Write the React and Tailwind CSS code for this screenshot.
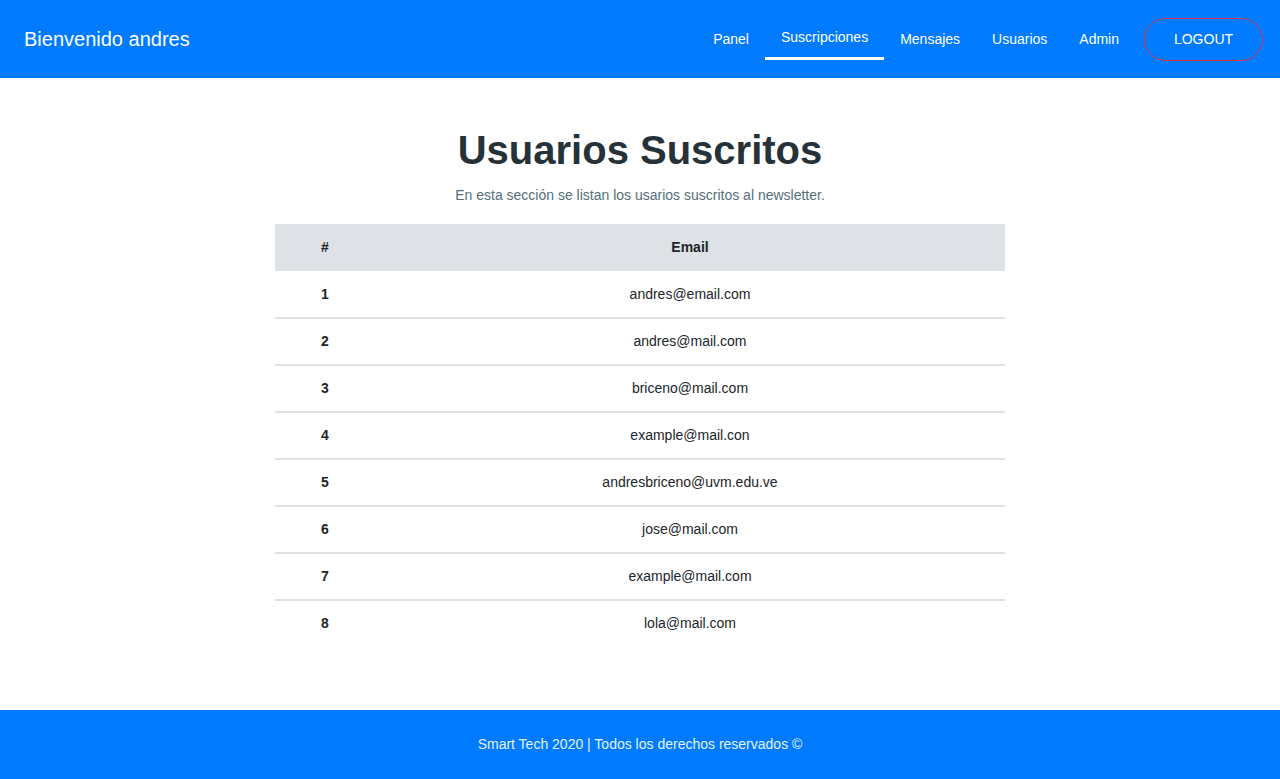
const users = [
  { id: 1, email: 'andres@email.com' },
  { id: 2, email: 'andres@mail.com' },
  { id: 3, email: 'briceno@mail.com' },
  { id: 4, email: 'example@mail.con' },
  { id: 5, email: 'andresbriceno@uvm.edu.ve' },
  { id: 6, email: 'jose@mail.com' },
  { id: 7, email: 'example@mail.com' },
  { id: 8, email: 'lola@mail.com' },
];

const links = ['Panel', 'Suscripciones', 'Mensajes', 'Usuarios', 'Admin'];

export default function App() {
  return (
    <div className="min-h-[779px] flex flex-col bg-white font-['Liberation_Sans',Arial,sans-serif]">
      {/* Navbar */}
      <nav className="h-[78px] bg-[#007bff] flex items-center justify-between pl-6 pr-[17px]">
        <span className="text-[20px] text-white">Bienvenido andres</span>
        <div className="flex items-center h-full">
          {links.map((l) =>
            l === 'Suscripciones' ? (
              <a key={l} className="px-4 h-[41px] flex items-center text-[14px] text-white border-b-[3px] border-white">
                {l}
              </a>
            ) : (
              <a key={l} className="px-4 text-[14px] text-white">
                {l}
              </a>
            )
          )}
          <button className="ml-[9px] w-[119px] h-[43px] rounded-full border border-[#dc3545] text-[14px] text-white">
            LOGOUT
          </button>
        </div>
      </nav>

      {/* Content */}
      <main className="flex-1 pt-[48px] pb-[64px]">
        <h1 className="text-center text-[40px] leading-[48px] font-bold text-[#263238]">Usuarios Suscritos</h1>
        <p className="mt-[11px] mb-[18px] text-center text-[14px] leading-[21px] text-[#546e7a]">
          En esta sección se listan los usarios suscritos al newsletter.
        </p>
        <table className="w-[730px] mx-auto text-[14px] text-[#212529]">
          <thead>
            <tr className="bg-[#dee2e6] h-[47px]">
              <th className="w-[100px] font-bold">#</th>
              <th className="font-bold">Email</th>
            </tr>
          </thead>
          <tbody>
            {users.map((u, i) => (
              <tr key={u.id} className={i < users.length - 1 ? 'h-[47px] border-b-2 border-[#dee2e6]' : 'h-[46px]'}>
                <td className="text-center font-bold">{u.id}</td>
                <td className="text-center">{u.email}</td>
              </tr>
            ))}
          </tbody>
        </table>
      </main>

      {/* Footer */}
      <footer className="h-[69px] bg-[#007bff] flex items-center justify-center text-[14px] text-[#e3f2fd]">
        Smart Tech 2020 | Todos los derechos reservados ©
      </footer>
    </div>
  );
}
